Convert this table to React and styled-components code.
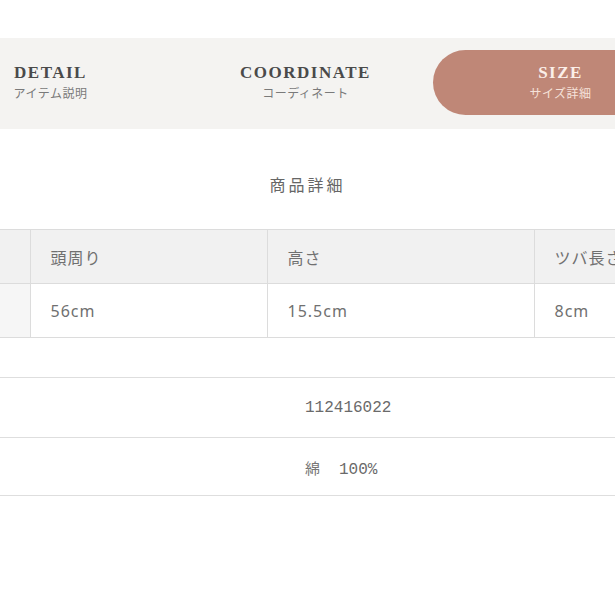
import React from "react";
import styled, { createGlobalStyle } from "styled-components";

const GlobalStyle = createGlobalStyle`
  html, body {
    margin: 0;
    padding: 0;
    background: #fff;
    overflow: hidden;
  }
  body {
    font-family: "Noto Sans CJK JP", "Noto Sans", sans-serif;
    color: #666;
  }
`

const Page = styled.div`
  width: 615px;
  overflow: hidden;
  padding-top: 38px;
`

const TabBand = styled.div`
  background-color: #f4f3f1;
  height: 91px;
  padding-top: 12px;
  box-sizing: border-box;
`

const TabList = styled.div`
  display: flex;
  width: 765px;
  margin-left: -77px;
`

const Tab = styled.div`
  width: 255px;
  height: 65px;
  display: flex;
  flex-direction: column;
  align-items: center;
  justify-content: center;
  border-radius: 33px 0 0 33px;
  background-color: ${props => props.$active ? "#bf8777" : "transparent"};
`

const TabTitle = styled.div`
  font-family: "Liberation Serif", "DejaVu Serif", serif;
  font-weight: 700;
  font-size: 17px;
  letter-spacing: 1.5px;
  line-height: 20px;
  color: ${props => props.$active ? "#fbefe9" : "#4a4a4a"};
  margin-top: -2px;
`

const TabSub = styled.div`
  font-size: 12px;
  letter-spacing: 0.5px;
  line-height: 16px;
  margin-top: 2px;
  color: ${props => props.$active ? "#f6e2da" : "#7a7a7a"};
`

const Heading = styled.h2`
  margin: 43px 0 0;
  text-align: center;
  font-weight: 400;
  font-size: 16px;
  line-height: 24px;
  letter-spacing: 3px;
  color: #666;
`

const SizeTable = styled.table`
  margin-top: 33px;
  border-collapse: collapse;
  table-layout: fixed;
  width: 800px;
`

const Cell = styled.td`
  height: 53px;
  padding: 0 0 0 20px;
  border: 1px solid #dcdcdc;
  font-family: "Noto Sans", "Noto Sans CJK JP", sans-serif;
  font-size: 16px;
  letter-spacing: 1px;
  color: #707070;
  text-align: left;
  white-space: nowrap;
  background-color: ${props => props.$head ? "#f1f1f1" : props.$side ? "#f6f6f6" : "#fff"};
  &:first-child {
    border-left: none;
  }
`

const InfoTable = styled.div`
  margin-top: 39px;
  border-top: 1px solid #dedede;
`

const InfoRow = styled.div`
  display: grid;
  grid-template-columns: 285px 1fr;
  align-items: center;
  height: ${props => props.$h}px;
  border-bottom: 1px solid #dedede;
`

const InfoValue = styled.div`
  grid-column: 2;
  padding-left: 20px;
  font-family: "Liberation Mono", "Noto Sans CJK JP", monospace;
  font-size: 16px;
  color: #6a6a6a;
`

const Kanji = styled.span`
  font-family: "Noto Sans CJK JP", sans-serif;
  font-size: 15px;
  color: #777;
  margin-right: 3px;
`

const tabs = [
  { title: "DETAIL", sub: "アイテム説明" },
  { title: "COORDINATE", sub: "コーディネート" },
  { title: "SIZE", sub: "サイズ詳細", active: true },
]

const columns = [
  { head: "", value: "" },
  { head: "頭周り", value: "56cm" },
  { head: "高さ", value: "15.5cm" },
  { head: "ツバ長さ", value: "8cm" },
]

function App() {
  return (
    <Page>
      <GlobalStyle />
      <TabBand>
        <TabList>
          {tabs.map(tab => (
            <Tab key={tab.title} $active={tab.active}>
              <TabTitle $active={tab.active}>{tab.title}</TabTitle>
              <TabSub $active={tab.active}>{tab.sub}</TabSub>
            </Tab>
          ))}
        </TabList>
      </TabBand>

      <Heading>商品詳細</Heading>

      <SizeTable>
        <colgroup>
          <col style={{ width: 30 }} />
          <col style={{ width: 237 }} />
          <col style={{ width: 267 }} />
          <col style={{ width: 266 }} />
        </colgroup>
        <tbody>
          <tr>
            {columns.map((c, i) => (
              <Cell key={i} $head>{c.head}</Cell>
            ))}
          </tr>
          <tr>
            {columns.map((c, i) => (
              <Cell key={i} $side={i === 0}>{c.value}</Cell>
            ))}
          </tr>
        </tbody>
      </SizeTable>

      <InfoTable>
        <InfoRow $h={59}>
          <InfoValue>112416022</InfoValue>
        </InfoRow>
        <InfoRow $h={57}>
          <InfoValue><Kanji>綿</Kanji>　100%</InfoValue>
        </InfoRow>
      </InfoTable>
    </Page>
  );
}

export default App;
